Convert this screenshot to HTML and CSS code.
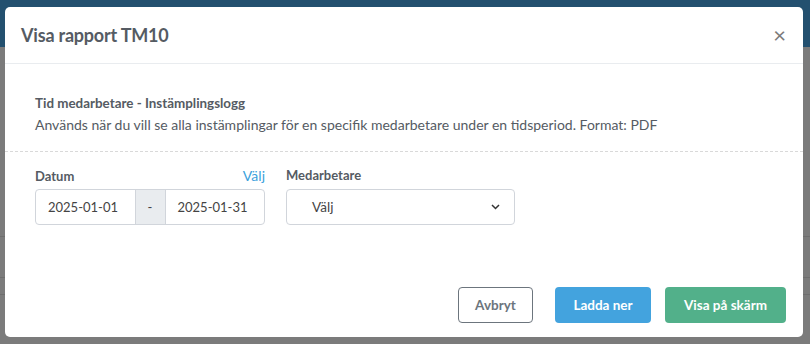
FILE: index.html
```html
<!DOCTYPE html>
<html lang="sv">
<head>
  <meta charset="UTF-8">
  <title>Visa rapport TM10</title>
  <link rel="stylesheet" href="styles.css">
</head>
<body>

<div class="page">
  <div class="navbar"></div>
  <div class="rows">
    <div class="row"></div>
    <div class="row"></div>
    <div class="row"></div>
  </div>
</div>

<div class="modal">
  <div class="modal-header">
    <h5>Visa rapport TM10</h5>
    <span class="close">&times;</span>
  </div>

  <div class="report-info">
    <div class="report-name">Tid medarbetare - Instämplingslogg</div>
    <div class="report-desc">Används när du vill se alla instämplingar för en specifik medarbetare under en tidsperiod. Format: PDF</div>
  </div>

  <div class="filters">
    <div class="field date-field">
      <div class="field-label">
        <span>Datum</span>
        <a class="pick">Välj</a>
      </div>
      <div class="input-group">
        <div class="input">2025-01-01</div>
        <div class="addon">-</div>
        <div class="input">2025-01-31</div>
      </div>
    </div>
    <div class="field select-field">
      <div class="field-label"><span>Medarbetare</span></div>
      <div class="select">
        <span>Välj</span>
        <svg width="9" height="6" viewBox="0 0 9 6"><path d="M1 1l3.5 3.5L8 1" fill="none" stroke="#333" stroke-width="1.5"/></svg>
      </div>
    </div>
  </div>

  <div class="modal-footer">
    <button class="btn btn-outline">Avbryt</button>
    <button class="btn btn-blue">Ladda ner</button>
    <button class="btn btn-green">Visa på skärm</button>
  </div>
</div>

</body>
</html>
```

FILE: styles.css
```css
body {
  margin: 0;
  font-family: 'Lato', 'Open Sans', sans-serif;
  background: #7b7b7b;
  height: 344px;
  overflow: hidden;
  position: relative;
}
.navbar {
  height: 47px;
  background: #23506f;
}
.rows {
  padding-top: 189px;
}
.row {
  height: 40px;
  border-top: 1px solid #6e6e6e;
}
.row:nth-child(2) {
  height: 16px;
}
.modal {
  position: absolute;
  top: 7px;
  left: 5px;
  width: 798px;
  height: 330px;
  background: #fff;
  border-radius: 5px;
  box-sizing: border-box;
  display: flex;
  flex-direction: column;
  color: #555b63;
}
.modal-header {
  height: 56px;
  border-bottom: 1px solid #e9ecef;
  display: flex;
  align-items: center;
  justify-content: space-between;
  padding: 0 17px 0 16px;
}
.modal-header h5 {
  margin: 0;
  font-size: 18px;
  font-weight: 700;
  color: #555b63;
  letter-spacing: -0.2px;
}
.close {
  font-size: 22px;
  color: #7a7a7a;
  font-weight: 400;
  line-height: 1;
}
.report-info {
  padding: 31px 30px 18px;
  border-bottom: 1px dashed #d9d9d9;
}
.report-name {
  font-size: 13.4px;
  font-weight: 700;
  color: #555b63;
  margin-bottom: 5px;
}
.report-desc {
  font-size: 14px;
  color: #555b63;
}
.filters {
  display: flex;
  gap: 21px;
  padding: 15px 30px 0;
}
.field-label {
  display: flex;
  justify-content: space-between;
  align-items: baseline;
  font-size: 13px;
  font-weight: 700;
  height: 22px;
}
.pick {
  color: #3b9fdc;
  font-weight: 400;
  font-size: 14px;
}
.input-group {
  display: flex;
  width: 230px;
  height: 36px;
  border: 1px solid #d1d5db;
  border-radius: 4px;
  box-sizing: border-box;
  font-size: 13px;
  color: #444;
}
.input {
  flex: 1;
  display: flex;
  align-items: center;
  padding-left: 12px;
}
.addon {
  width: 29px;
  background: #e9ecef;
  border-left: 1px solid #d1d5db;
  border-right: 1px solid #d1d5db;
  display: flex;
  align-items: center;
  justify-content: center;
}
.select {
  width: 229px;
  height: 36px;
  box-sizing: border-box;
  border: 1px solid #d1d5db;
  border-radius: 4px;
  display: flex;
  align-items: center;
  justify-content: space-between;
  padding: 0 14px 0 25px;
  font-size: 13.5px;
  color: #444;
}
.modal-footer {
  margin-top: auto;
  display: flex;
  justify-content: flex-end;
  padding: 0 17px 14px;
}
.btn {
  height: 36px;
  border-radius: 4px;
  font-family: inherit;
  font-size: 13.5px;
  font-weight: 700;
  border: 1px solid transparent;
  color: #fff;
  padding: 0;
}
.btn-outline {
  width: 75px;
  background: #fff;
  border-color: #6c757d;
  color: #6c757d;
  margin-right: 22px;
}
.btn-blue {
  width: 96px;
  background: #43a3de;
  margin-right: 14px;
}
.btn-green {
  width: 121px;
  background: #52b08a;
}
```
